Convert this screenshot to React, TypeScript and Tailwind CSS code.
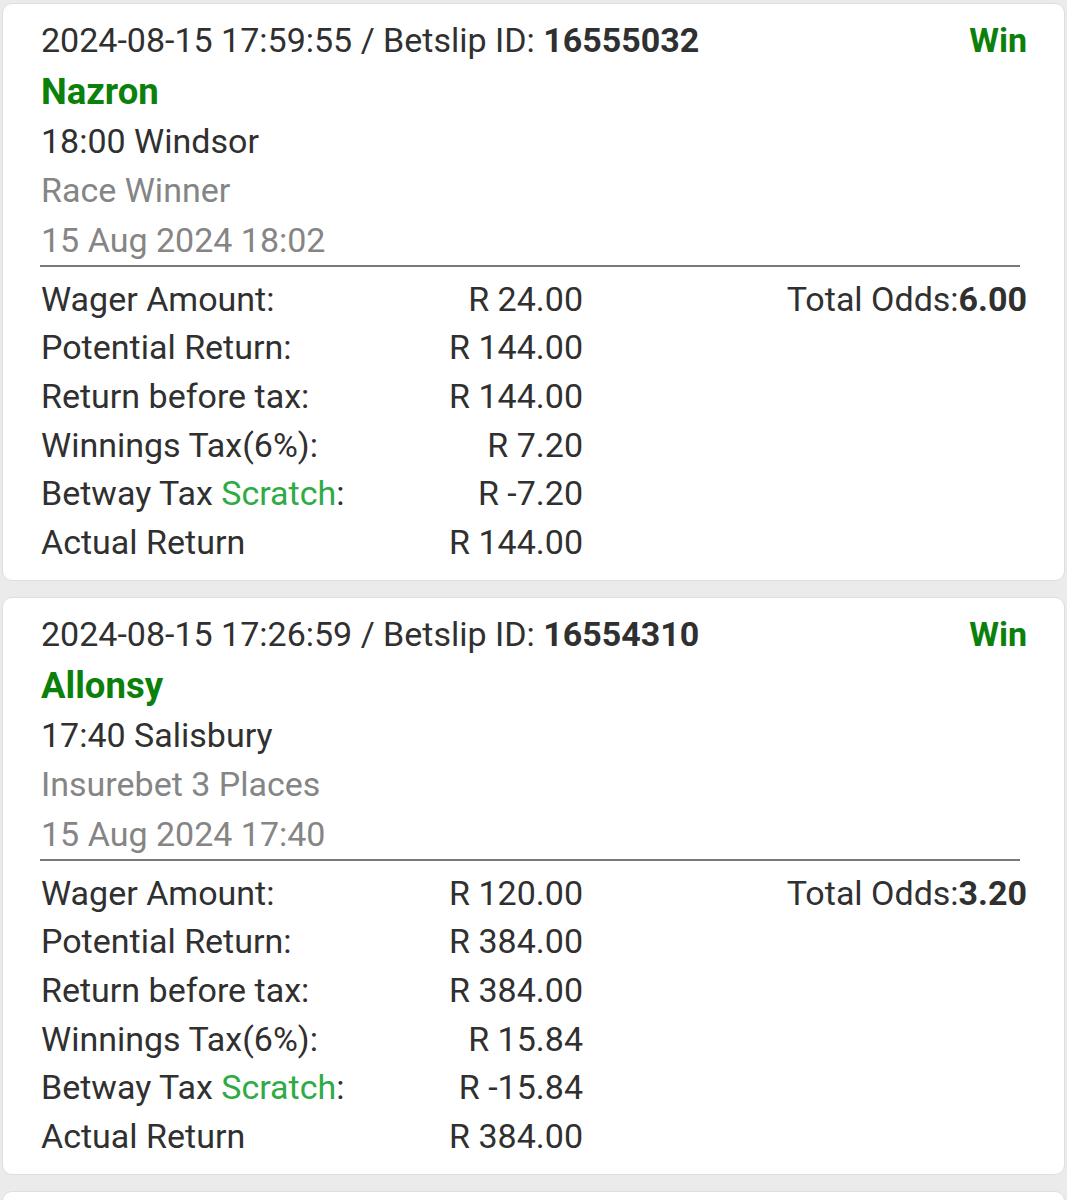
import React from "react";

type Bet = {
  ts: string;
  id: string;
  horse: string;
  race: string;
  market: string;
  date: string;
  wager: string;
  potential: string;
  before: string;
  tax: string;
  scratch: string;
  actual: string;
  odds: string;
};

const bets: Bet[] = [
  {
    ts: "2024-08-15 17:59:55",
    id: "16555032",
    horse: "Nazron",
    race: "18:00 Windsor",
    market: "Race Winner",
    date: "15 Aug 2024 18:02",
    wager: "R 24.00",
    potential: "R 144.00",
    before: "R 144.00",
    tax: "R 7.20",
    scratch: "R -7.20",
    actual: "R 144.00",
    odds: "6.00",
  },
  {
    ts: "2024-08-15 17:26:59",
    id: "16554310",
    horse: "Allonsy",
    race: "17:40 Salisbury",
    market: "Insurebet 3 Places",
    date: "15 Aug 2024 17:40",
    wager: "R 120.00",
    potential: "R 384.00",
    before: "R 384.00",
    tax: "R 15.84",
    scratch: "R -15.84",
    actual: "R 384.00",
    odds: "3.20",
  },
];

function Row({ label, value, right }: { label: React.ReactNode; value: string; right?: React.ReactNode }) {
  return (
    <div className="flex h-[48.6px] items-center">
      <div className="flex w-[542px] justify-between">
        <span>{label}</span>
        <span>{value}</span>
      </div>
      <div className="flex-1 text-right">{right}</div>
    </div>
  );
}

function Card({ b }: { b: Bet }) {
  return (
    <div className="mx-[2px] h-[578px] rounded-[10px] border border-[#dedede] bg-white pl-[38px] pr-[37px] pt-[12px]">
      <div className="leading-[49.5px]">
        <div className="flex justify-between">
          <span>
            {b.ts} / Betslip ID: <span className="font-bold">{b.id}</span>
          </span>
          <span className="font-bold text-[#0b800b]">Win</span>
        </div>
        <div className="text-[36.5px] font-bold leading-[51px] text-[#0b800b]">{b.horse}</div>
        <div>{b.race}</div>
        <div className="text-[#858585]">{b.market}</div>
        <div className="text-[#858585]">{b.date}</div>
      </div>
      <div className="mr-[7px] -ml-[1px] h-[2px] bg-[#7a7a7a]" />
      <div className="mt-[8px]">
        <Row
          label="Wager Amount:"
          value={b.wager}
          right={
            <span>
              Total Odds:<span className="font-bold">{b.odds}</span>
            </span>
          }
        />
        <Row label="Potential Return:" value={b.potential} />
        <Row label="Return before tax:" value={b.before} />
        <Row label="Winnings Tax(6%):" value={b.tax} />
        <Row
          label={
            <span>
              Betway Tax <span className="text-[#2eab45]">Scratch</span>:
            </span>
          }
          value={b.scratch}
        />
        <Row label="Actual Return" value={b.actual} />
      </div>
    </div>
  );
}

export default function App() {
  return (
    <div
      className="h-[1200px] overflow-hidden bg-[#ebebeb] pt-[3px] text-[34px] text-[#303030]"
      style={{ fontFamily: "Roboto, 'Noto Sans', sans-serif" }}
    >
      <div className="flex flex-col gap-[16px]">
        {bets.map((b) => (
          <Card key={b.id} b={b} />
        ))}
        <div className="mx-[2px] h-[100px] rounded-[10px] border border-[#dedede] bg-white" />
      </div>
    </div>
  );
}
